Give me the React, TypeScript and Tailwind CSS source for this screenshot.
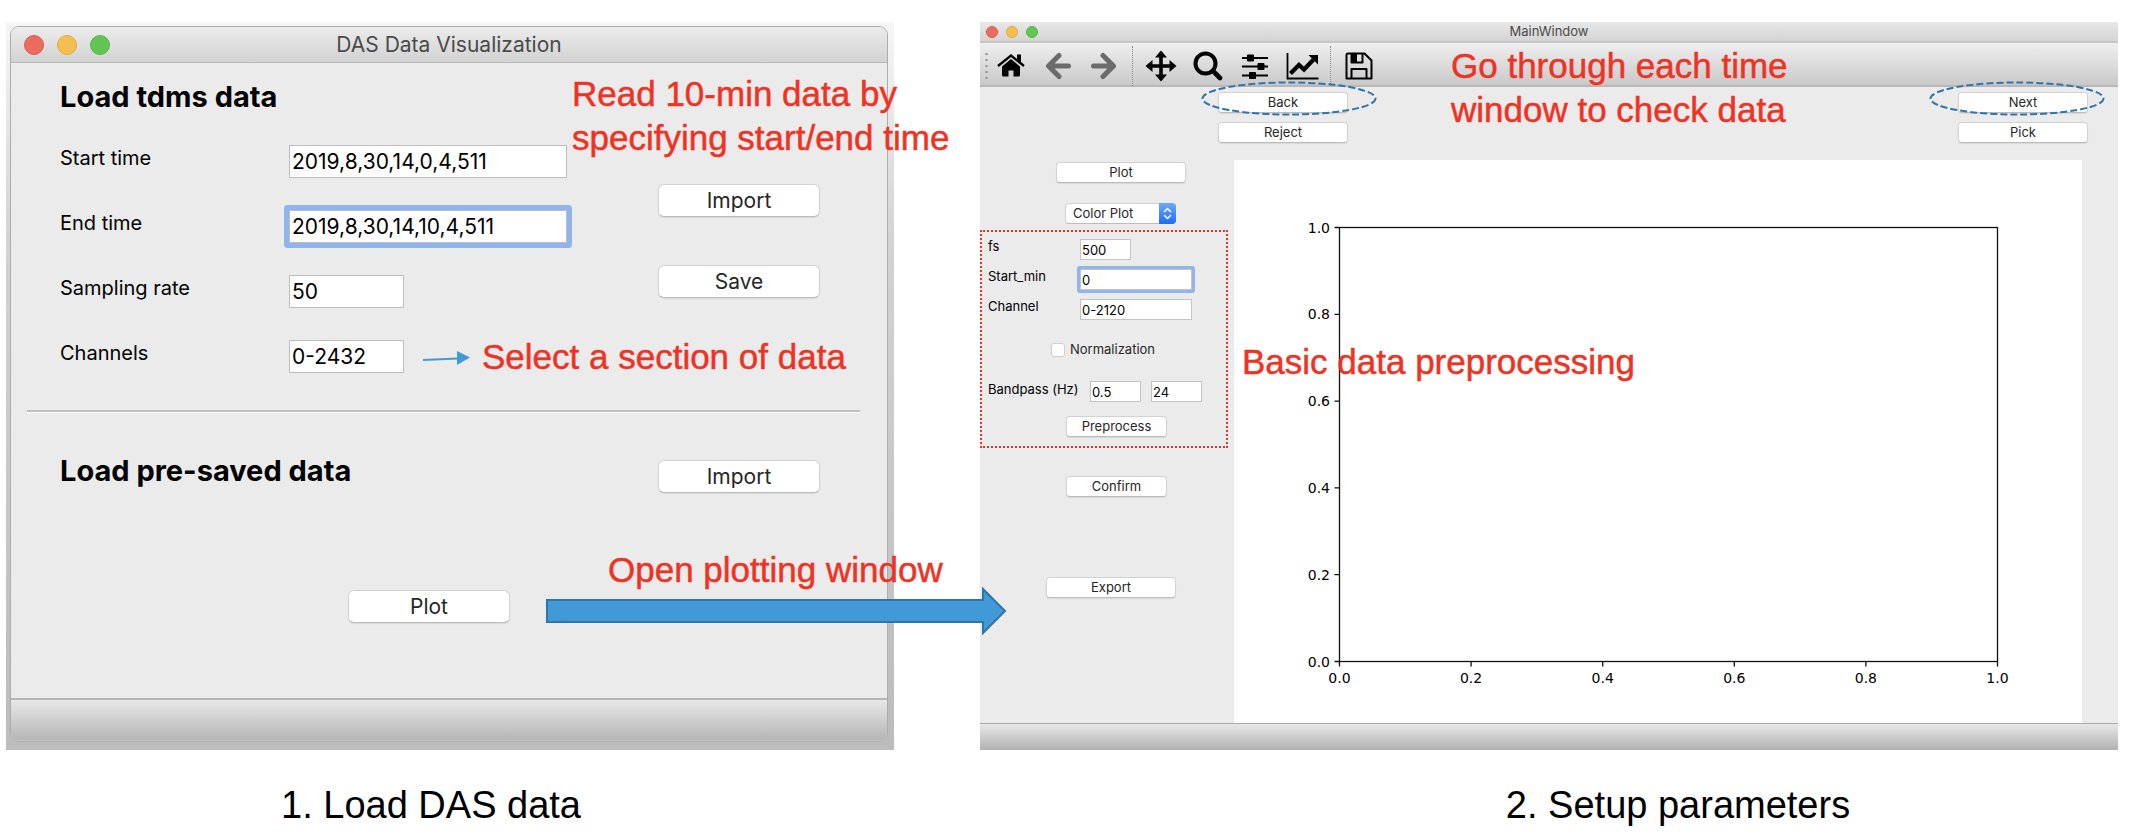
import type { ReactNode } from "react";

function Lights({ small = false }: { small?: boolean }) {
  const dot = small ? "size-[12px]" : "size-5";
  return (
    <div className={small ? "flex items-center gap-2" : "flex items-center gap-[13px]"}>
      <button type="button" aria-label="Close" className={`${dot} rounded-full border border-[#dc5a50] bg-[#ed6a5e]`} />
      <button type="button" aria-label="Minimize" className={`${dot} rounded-full border border-[#e0a940] bg-[#f5bf4f]`} />
      <button type="button" aria-label="Zoom" className={`${dot} rounded-full border border-[#54b548] bg-[#61c554]`} />
    </div>
  );
}

const buttonBase =
  "border border-[#d2d2d2] border-b-[#bcbcbc] bg-white text-[#262626] flex items-center justify-center shadow-[0_1px_1px_rgba(0,0,0,0.08)]";

function LargeButton({ children }: { children: ReactNode }) {
  return (
    <button type="button" className={`${buttonBase} h-[33px] w-[162px] rounded-md text-[21px]`}>
      {children}
    </button>
  );
}

function SmallButton({ children, width = "w-[130px]" }: { children: ReactNode; width?: string }) {
  return (
    <button type="button" className={`${buttonBase} h-[21px] ${width} rounded-[4px] text-[13px]`}>
      {children}
    </button>
  );
}

function LoadField({ id, label, value, width, focused = false }: { id: string; label: string; value: string; width: string; focused?: boolean }) {
  return (
    <div className="flex items-start">
      <label htmlFor={id} className="w-[229px] shrink-0 text-[20px] leading-[27px]">
        {label}
      </label>
      <input
        id={id}
        defaultValue={value}
        className={`${width} h-[33px] border border-[#bdbdbd] bg-white px-[2px] text-[21px] outline-none ${
          focused ? "rounded-[1px] ring-[5px] ring-[#8fb5ec]" : ""
        }`}
      />
    </div>
  );
}

function SmallInput({ id, value, width, label, focused = false }: { id: string; value: string; width: string; label?: string; focused?: boolean }) {
  return (
    <input
      id={id}
      aria-label={label}
      defaultValue={value}
      className={`${width} h-[21px] border border-[#c4c4c4] bg-white px-[1px] text-[13px] outline-none ${
        focused ? "rounded-[1px] ring-3 ring-[#8fb5ec]" : ""
      }`}
    />
  );
}

function SetupField({ id, label, value, width, focused = false }: { id: string; label: string; value: string; width: string; focused?: boolean }) {
  return (
    <div className="flex items-start">
      <label htmlFor={id} className="w-[92px] shrink-0 text-[13px] leading-[14px]">
        {label}
      </label>
      <SmallInput id={id} value={value} width={width} focused={focused} />
    </div>
  );
}

function Note({ place, children }: { place: string; children: ReactNode }) {
  return (
    <p className={`pointer-events-none absolute z-10 whitespace-nowrap font-['Liberation_Sans',sans-serif] text-[35px] leading-[44px] text-[#ee3324] [-webkit-text-stroke:0.5px_#ee3324] ${place}`}>
      {children}
    </p>
  );
}

function DashedEllipse({ place }: { place: string }) {
  return (
    <svg aria-hidden="true" width="176" height="35" viewBox="0 0 176 35" className={`pointer-events-none absolute ${place}`}>
      <ellipse cx="88" cy="17.5" rx="86.5" ry="16" fill="none" stroke="#2e75a8" strokeWidth="2" strokeDasharray="7 3" />
    </svg>
  );
}

function LoadWindow() {
  return (
    <section aria-label="DAS Data Visualization" className="relative">
      <div className="bg-linear-to-b from-[#f6f6f6] via-[#d3d3d3] via-30% to-[#bcbcbc] pt-1 pr-[6px] pb-2 pl-1">
        <div className="overflow-hidden rounded-[9px] border border-[#acacac] bg-[#ebebeb]">
          <header className="relative flex h-9 items-center border-b border-[#b8b8b8] bg-linear-to-b from-[#ececec] to-[#d2d2d2] pl-[13px]">
            <Lights />
            <h1 className="absolute inset-x-0 text-center text-[21px] text-[#4a4a4a]">DAS Data Visualization</h1>
          </header>
          <div className="flex justify-between pr-[67px] pl-[49px]">
            <div className="pt-4">
              <h2 className="mb-[30px] text-[29px] leading-9 font-bold">Load tdms data</h2>
              <div className="flex flex-col gap-8">
                <LoadField id="start" label="Start time" value="2019,8,30,14,0,4,511" width="w-[278px]" />
                <LoadField id="end" label="End time" value="2019,8,30,14,10,4,511" width="w-[278px]" focused />
                <LoadField id="rate" label="Sampling rate" value="50" width="w-[115px]" />
                <LoadField id="channels" label="Channels" value="0-2432" width="w-[115px]" />
              </div>
            </div>
            <div className="flex flex-col gap-12 pt-[121px]">
              <LargeButton>Import</LargeButton>
              <LargeButton>Save</LargeButton>
            </div>
          </div>
          <hr className="mt-[37px] mr-[27px] ml-4 h-[3px] border-t-2 border-b border-t-[#bebebe] border-b-white" />
          <div className="flex items-start justify-between pt-10 pr-[67px] pl-[49px]">
            <h2 className="text-[29px] leading-9 font-bold">Load pre-saved data</h2>
            <div className="pt-[7px]">
              <LargeButton>Import</LargeButton>
            </div>
          </div>
          <div className="flex justify-center pt-[97px] pr-10 pb-[75px]">
            <LargeButton>Plot</LargeButton>
          </div>
          <footer className="h-[43px] border-t-2 border-[#b6b6b6] bg-linear-to-b from-[#e8e8e8] to-[#b4b4b4] shadow-[inset_0_-1px_0_#c6c6c6]" />
        </div>
      </div>

      <Note place="top-[50px] left-[566px]">
        Read 10-min data by
        <br />
        specifying start/end time
      </Note>
      <Note place="top-[313px] left-[476px]">Select a section of data</Note>
      <Note place="top-[526px] left-[602px]">Open plotting window</Note>
      <svg aria-hidden="true" width="50" height="16" viewBox="0 0 50 16" className="absolute top-[328px] left-[416px]">
        <path d="M1 10 36 8.500" stroke="#4299d8" strokeWidth="2" />
        <path d="M35 1 48 7.500 35 15Z" fill="#4299d8" />
      </svg>
      <svg aria-hidden="true" width="462" height="52" viewBox="0 0 462 52" className="absolute top-[563px] left-[539px] z-10">
        <path d="M2 15H438V4L460 26 438 48V37H2Z" fill="#4299d8" stroke="#2e75a8" strokeWidth="2" />
      </svg>
    </section>
  );
}

function ToolButton({ label, width, children }: { label: string; width: string; children: ReactNode }) {
  return (
    <button type="button" aria-label={label} className={`${width} flex h-8 shrink-0 items-center justify-center`}>
      {children}
    </button>
  );
}

function Toolbar() {
  return (
    <div role="toolbar" aria-label="Plot tools" className="flex h-11 items-center border-b-2 border-[#b8b8b8] bg-linear-to-b from-[#efefef] to-[#c9c9c9] pt-[3px] pl-[5px]">
      <svg aria-hidden="true" width="3" height="30" viewBox="0 0 3 30" className="mr-[6px]">
        <path d="M1.500 2V28" stroke="#8f8f8f" strokeWidth="2" strokeDasharray="2 4" />
      </svg>
      <ToolButton label="Home" width="w-[34px]">
        <svg width="28" height="26" viewBox="0 0 28 26">
          <path d="M14 6 5 13.500V22Q5 23.500 6.500 23.500H11.500V17.500H16.500V23.500H21.500Q23 23.500 23 22V13.500Z" />
          <path d="M1 13 14 2.500 27 13" fill="none" stroke="#000" strokeWidth="2.300" />
          <path d="M20 1.500H24V10L20 7Z" />
        </svg>
      </ToolButton>
      <ToolButton label="Previous view" width="ml-4 w-[28px]">
        <svg width="28" height="28" viewBox="0 0 28 28" fill="none" stroke="#6b6b6b" strokeWidth="5" strokeLinecap="round" strokeLinejoin="round">
          <path d="M15 3.500 4.500 14 15 24.500M5 14H24.500" />
        </svg>
      </ToolButton>
      <ToolButton label="Next view" width="ml-[18px] w-[28px]">
        <svg width="28" height="28" viewBox="0 0 28 28" fill="none" stroke="#6b6b6b" strokeWidth="5" strokeLinecap="round" strokeLinejoin="round">
          <path d="M13 3.500 23.500 14 13 24.500M23 14H3.500" />
        </svg>
      </ToolButton>
      <span className="ml-[14px] h-10 border-l border-dotted border-[#8a8a8a]" />
      <ToolButton label="Pan" width="ml-3 w-[32px]">
        <svg width="32" height="32" viewBox="0 0 32 32">
          <path d="M16 5V27M5 16H27" stroke="#000" strokeWidth="3.600" />
          <path d="M16 .5 22 7.500H10ZM16 31.500 22 24.500H10ZM.5 16 7.500 10V22ZM31.500 16 24.500 10V22Z" />
        </svg>
      </ToolButton>
      <ToolButton label="Zoom to rectangle" width="ml-4 w-[30px]">
        <svg width="30" height="30" viewBox="0 0 30 30" fill="none" stroke="#000">
          <circle cx="12.500" cy="12.500" r="10" strokeWidth="4" />
          <path d="M20 20 27 27" strokeWidth="4.600" strokeLinecap="round" />
        </svg>
      </ToolButton>
      <ToolButton label="Configure subplots" width="ml-[18px] w-[28px]">
        <svg width="28" height="28" viewBox="0 0 28 28">
          <path d="M1 6H27M1 14.500H27M1 23.500H27" stroke="#000" strokeWidth="2.200" />
          <path d="M6.500 3H12.500V9H6.500ZM17 11.500H23V17.500H17ZM8.500 20.500H14.500V26.500H8.500Z" stroke="#000" strokeWidth="1" strokeLinejoin="round" />
        </svg>
      </ToolButton>
      <ToolButton label="Edit axes" width="ml-[17px] w-[33px]">
        <svg width="33" height="28" viewBox="0 0 33 28" fill="none" stroke="#000">
          <path d="M1.500 1V26.500H32.500" strokeWidth="1.800" />
          <path d="M4.500 21.500 13 13 18 17.500 27.500 7.500" strokeWidth="4.200" />
          <path d="M22.500 3H32V12.500Z" fill="#000" stroke="none" />
        </svg>
      </ToolButton>
      <span className="ml-[11px] h-10 border-l border-dotted border-[#8a8a8a]" />
      <ToolButton label="Save" width="ml-[14px] w-[28px]">
        <svg width="28" height="28" viewBox="0 0 28 28" fill="none" stroke="#000" strokeWidth="2" strokeLinejoin="round">
          <path d="M3 1.500H19.500L26.500 8.500V26.500H1.500V3Q1.500 1.500 3 1.500Z" />
          <path d="M6.500 26V17H21.500V26" />
          <path d="M6.500 2V10.500H17.500V2" />
          <path d="M7 2H12V10H7Z" fill="#000" stroke="none" />
        </svg>
      </ToolButton>
    </div>
  );
}

const ticks = ["0.0", "0.2", "0.4", "0.6", "0.8", "1.0"];

function Chart() {
  return (
    <svg role="img" aria-label="Empty plot axes" viewBox="0 0 848 563" className="block h-auto w-full bg-white font-['DejaVu_Sans',sans-serif] text-[14px]">
      <rect x="105.500" y="67.500" width="658" height="434" fill="none" stroke="#111" strokeWidth="1.300" />
      {ticks.map((t, i) => (
        <g key={t}>
          <path d={`M105.500 ${501.5 - i * 86.8}h-5M${105.5 + i * 131.6} 501.500v5`} stroke="#111" strokeWidth="1.300" />
          <text x="96" y={506.5 - i * 86.8} textAnchor="end">
            {t}
          </text>
          <text x={105.5 + i * 131.6} y="522.500" textAnchor="middle">
            {t}
          </text>
        </g>
      ))}
    </svg>
  );
}

function MainWindow() {
  return (
    <section aria-label="MainWindow" className="relative">
      <div className="bg-[#ebebeb]">
        <header className="relative flex h-[21px] items-center border-b-2 border-[#c6c6c6] bg-linear-to-b from-[#e8e8e8] to-[#d4d4d4] pl-[6px]">
          <Lights small />
          <h1 className="absolute inset-x-0 text-center text-[13px] text-[#4a4a4a]">MainWindow</h1>
        </header>
        <Toolbar />
        <div className="flex h-[73px] justify-between pt-[5px] pr-[30px] pl-[238px]">
          <div className="relative flex flex-col gap-[9px]">
            <SmallButton>Back</SmallButton>
            <SmallButton>Reject</SmallButton>
            <DashedEllipse place="-top-[11px] -left-[17px]" />
          </div>
          <div className="relative flex flex-col gap-[9px]">
            <SmallButton>Next</SmallButton>
            <SmallButton>Pick</SmallButton>
            <DashedEllipse place="-top-[11px] -left-[29px]" />
          </div>
        </div>
        <div className="flex">
          <aside className="w-[254px] shrink-0 pt-[2px]">
            <div className="pl-[76px]">
              <SmallButton>Plot</SmallButton>
            </div>
            <div className="relative mt-5 ml-[85px] w-[111px]">
              <select
                aria-label="Plot type"
                className="block h-[21px] w-full appearance-none rounded-[4px] border border-[#d2d2d2] border-b-[#bcbcbc] bg-white pl-[7px] text-[13px] text-[#262626]"
              >
                <option>Color Plot</option>
              </select>
              <span className="pointer-events-none absolute inset-y-0 right-0 flex w-[17px] items-center justify-center rounded-r-[4px] bg-linear-to-b from-[#6aabfa] to-[#1a6cf6]">
                <svg aria-hidden="true" width="9" height="13" viewBox="0 0 9 13" fill="none" stroke="#fff" strokeWidth="1.500" strokeLinecap="round" strokeLinejoin="round">
                  <path d="M1.500 4.500 4.500 1.500 7.500 4.500M1.500 8.500 4.500 11.500 7.500 8.500" />
                </svg>
              </span>
            </div>
            <div className="mt-[6px] h-[218px] w-[248px] border-2 border-dotted border-[#ee3324] pt-[7px] pl-[6px]">
              <div className="flex flex-col gap-[9px]">
                <SetupField id="fs" label="fs" value="500" width="w-[51px]" />
                <SetupField id="start-min" label="Start_min" value="0" width="w-[112px]" focused />
                <SetupField id="channel" label="Channel" value="0-2120" width="w-[112px]" />
              </div>
              <label className="mt-[21px] ml-[63px] flex h-[18px] items-center gap-[5px] text-[13px] text-[#262626]">
                <input type="checkbox" className="size-[14px] appearance-none rounded-[3px] border border-[#cfcfcf] bg-white" />
                Normalization
              </label>
              <div className="mt-[22px] flex items-start">
                <label htmlFor="band-low" className="w-[102px] text-[13px] leading-[16px]">
                  Bandpass (Hz)
                </label>
                <SmallInput id="band-low" value="0.5" width="w-[51px]" />
                <span className="w-[10px]" />
                <SmallInput id="band-high" label="Bandpass upper limit (Hz)" value="24" width="w-[51px]" />
              </div>
              <div className="mt-[14px] pl-[78px]">
                <SmallButton width="w-[101px]">Preprocess</SmallButton>
              </div>
            </div>
            <div className="mt-7 pl-[86px]">
              <SmallButton width="w-[101px]">Confirm</SmallButton>
            </div>
            <div className="mt-20 pl-[66px]">
              <SmallButton>Export</SmallButton>
            </div>
          </aside>
          <div className="mr-9 min-w-0 flex-1">
            <Chart />
          </div>
        </div>
        <footer className="h-[27px] border-t border-[#a9a9a9] bg-linear-to-b from-[#e8e8e8] to-[#b2b2b2]" />
      </div>
      <Note place="top-[22px] left-[471px]">
        Go through each time
        <br />
        window to check data
      </Note>
      <Note place="top-[318px] left-[262px]">Basic data preprocessing</Note>
    </section>
  );
}

export default function App() {
  return (
    <main className="grid min-h-screen grid-cols-[888fr_1138fr] content-start gap-x-[86px] bg-white pt-[22px] pr-3 pl-[6px] font-['Inter',sans-serif] text-black">
      <LoadWindow />
      <MainWindow />
      <p className="mt-[31px] pr-[38px] text-center font-['Liberation_Sans',sans-serif] text-[38px] leading-[48px]">1. Load DAS data</p>
      <p className="mt-[31px] pl-[258px] text-center font-['Liberation_Sans',sans-serif] text-[38px] leading-[48px]">2. Setup parameters</p>
    </main>
  );
}
